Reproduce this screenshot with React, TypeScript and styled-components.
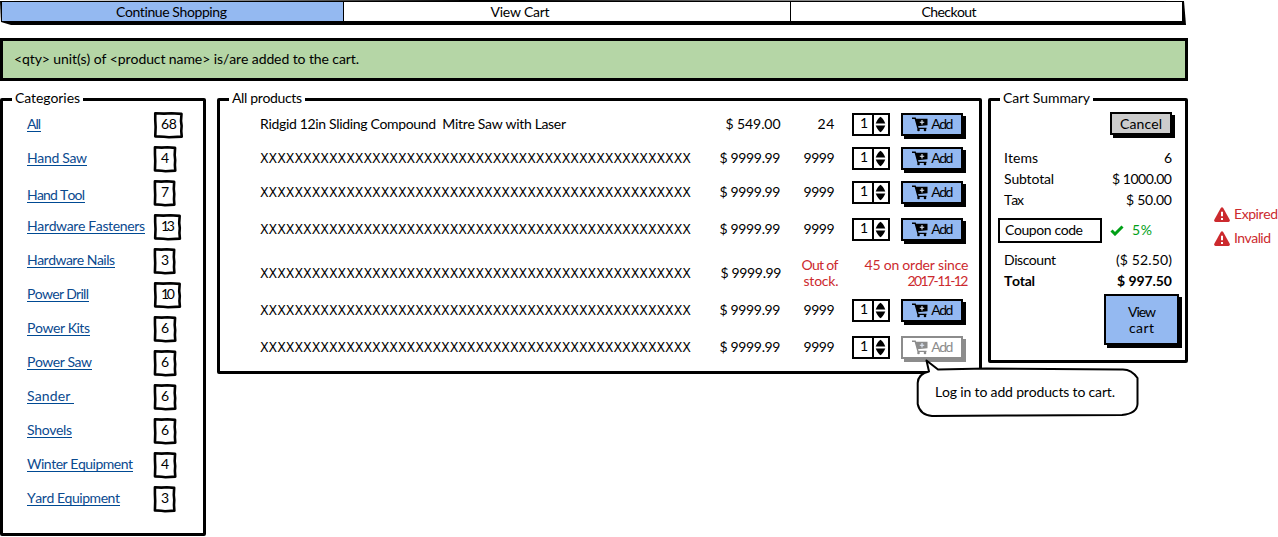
import React, { useLayoutEffect, useRef, useState } from "react";
import styled, { createGlobalStyle } from "styled-components";

const ink = "#000";
const blue = "#94b9f1";
const red = "#cc2a2e";
const grey = "#8c8c8c";

const GlobalStyle = createGlobalStyle`
  *, *::before, *::after { box-sizing: border-box; }
  body { margin: 0; background: #fff; overflow: hidden; }
`;

const Page = styled.div`
  position: relative;
  width: 1278px;
  height: 537px;
  overflow: hidden;
  font: 14px/20px Lato, "Liberation Sans", sans-serif;
  font-kerning: none;
  font-variant-ligatures: none;
  color: ${ink};
`;

const TextBox = styled.span<{ $w: number; $color?: string; $bold?: boolean; $narrow?: boolean }>`
  display: block;
  flex: none;
  width: ${(p) => p.$w}px;
  height: 20px;
  white-space: pre;
  font-family: ${(p) => (p.$narrow ? '"Liberation Sans Narrow", "DejaVu Sans Condensed", Lato, sans-serif' : "inherit")};
  font-weight: ${(p) => (p.$bold ? 700 : 400)};
  color: ${(p) => p.$color ?? "inherit"};
`;

type TextProps = { w: number; color?: string; bold?: boolean; narrow?: boolean; children: string };

function Text({ w, color, bold, narrow, children }: TextProps) {
  const ref = useRef<HTMLSpanElement>(null);
  const [track, setTrack] = useState(0);
  useLayoutEffect(() => {
    if (ref.current) {
      const natural = ref.current.getBoundingClientRect().width;
      setTrack((w - natural) / Math.max(1, children.length - 1));
    }
  }, [w, children]);
  return (
    <TextBox $w={w} $color={color} $bold={bold} $narrow={narrow} style={{ letterSpacing: track }}>
      <span ref={ref}>{children}</span>
    </TextBox>
  );
}

const Nav = styled.nav`
  display: flex;
  width: 1186px;
  height: 25px;
  border: solid ${ink};
  border-width: 2px 4px 4.5px 2px;
  clip-path: polygon(0 1px, 40% 0, 1184px 1px, 100% 25px, 11px 25px, 1px 22px);
`;

const Tab = styled.a<{ $w: number; $pr: number; $active?: boolean }>`
  display: flex;
  justify-content: center;
  width: ${(p) => p.$w}px;
  padding-right: ${(p) => p.$pr}px;
  background: ${(p) => (p.$active ? blue : "#fff")};
  border-right: 1px solid ${ink};
  &:last-child { border-right: 0; }
`;

const Alert = styled.div`
  display: flex;
  align-items: center;
  margin-top: 13px;
  width: 1188px;
  height: 43px;
  padding: 0 0 2px 11px;
  border: 3px solid ${ink};
  background: #b5d6a6;
`;

const Columns = styled.main`
  display: flex;
  align-items: flex-start;
  margin-top: 17px;
`;

const Panel = styled.section<{ $w: number; $h: number; $ml?: number }>`
  position: relative;
  width: ${(p) => p.$w}px;
  height: ${(p) => p.$h}px;
  margin-left: ${(p) => p.$ml ?? 0}px;
  border: 3px solid ${ink};
  border-radius: 2px;
`;

const Legend = styled.h2`
  position: absolute;
  top: -13px;
  left: 9px;
  margin: 0;
  padding: 0 3px;
  background: #fff;
  font: inherit;
`;

const CategoryList = styled.ul`
  list-style: none;
  margin: 0;
  padding: 11px 0 0 24px;
`;

const CategoryRow = styled.li`
  display: flex;
  height: 34px;
`;

const CategoryLink = styled.a<{ $drop?: number }>`
  height: 18px;
  margin-top: ${(p) => 2 + (p.$drop ?? 0)}px;
  border-bottom: 1px solid #004a93;
  color: #0b4a8f;
`;

const LinkCell = styled.div`
  width: 127px;
  display: flex;
  align-items: flex-start;
`;

const Count = styled.span<{ $w: number }>`
  position: relative;
  display: flex;
  align-items: center;
  width: ${(p) => p.$w}px;
  height: 26px;
  padding: 0 0 2px 7px;
`;

const CountFrame = styled.svg`
  position: absolute;
  inset: 0;
  width: 100%;
  height: 100%;
  overflow: visible;
`;

const ProductList = styled.div`
  display: flex;
  flex-direction: column;
`;

const ProductRow = styled.div<{ $mt: number }>`
  display: flex;
  align-items: center;
  height: 26px;
  margin-top: ${(p) => p.$mt}px;
  padding-left: 40px;
`;

const NameCell = styled.div`
  width: 440px;
`;

const NumberCell = styled.div<{ $w: number }>`
  display: flex;
  justify-content: flex-end;
  width: ${(p) => p.$w}px;
`;

const Stepper = styled.div`
  display: flex;
  width: 38px;
  height: 23px;
  margin-left: 17.5px;
  border: 2px solid ${ink};
  background: #fff;
  & > svg { flex: none; }
`;

const StepValue = styled.div`
  display: flex;
  align-items: center;
  flex: none;
  width: 20px;
  padding: 0 0 2px 6px;
  border-right: 2px solid ${ink};
`;

const Button = styled.button<{ $w: number; $h: number; $bg: string; $muted?: boolean; $ml?: number }>`
  display: flex;
  align-items: center;
  justify-content: center;
  width: ${(p) => p.$w}px;
  height: ${(p) => p.$h}px;
  margin: 0 0 0 ${(p) => p.$ml ?? 0}px;
  padding: 0;
  border: 2px solid ${(p) => (p.$muted ? grey : ink)};
  background: ${(p) => p.$bg};
  box-shadow: 3px 3px 0 ${(p) => (p.$muted ? grey : ink)};
  font: inherit;
  font-kerning: none;
  color: ${(p) => (p.$muted ? grey : ink)};
`;

const CartSvg = styled.svg`
  width: 16px;
  height: 15px;
  margin-right: 3px;
`;

const Stacked = styled.div<{ $w: number; $ml?: number; $center?: boolean }>`
  display: flex;
  flex-direction: column;
  align-items: ${(p) => (p.$center ? "center" : "flex-end")};
  width: ${(p) => p.$w}px;
  margin-left: ${(p) => p.$ml ?? 0}px;
  & > span { height: 16px; line-height: 16px; }
`;

const Summary = styled.div`
  display: flex;
  flex-direction: column;
  padding: 11px 13px 0 13px;
`;

const SummaryRow = styled.div<{ $mt?: number }>`
  display: flex;
  justify-content: space-between;
  height: 21px;
  margin-top: ${(p) => p.$mt ?? 0}px;
`;

const RightRow = styled.div<{ $mr?: number; $mt?: number }>`
  display: flex;
  justify-content: flex-end;
  margin-right: ${(p) => p.$mr ?? 0}px;
  margin-top: ${(p) => p.$mt ?? 0}px;
`;

const CouponRow = styled.div`
  display: flex;
  align-items: center;
  height: 27px;
  margin: 6px 0 6px -6px;
`;

const CouponInput = styled.div`
  display: flex;
  align-items: center;
  width: 104px;
  height: 25px;
  padding: 0 0 2px 5px;
  border: 2.5px solid ${ink};
`;

const CouponRate = styled.div`
  padding-bottom: 2px;
`;

const Check = styled.svg`
  width: 14px;
  height: 11px;
  margin: 0 8px;
`;

const Notes = styled.aside`
  display: flex;
  flex-direction: column;
  gap: 4px;
  margin: 106px 0 0 26px;
`;

const Note = styled.div`
  display: flex;
  align-items: center;
  gap: 4px;
  color: ${red};
`;

const Callout = styled.div`
  position: absolute;
  left: 916px;
  top: 358px;
  width: 224px;
  height: 60px;
  padding: 24px 0 0 19px;
`;

const CalloutShape = styled.svg`
  position: absolute;
  inset: 0;
`;

const CalloutText = styled.div`
  position: relative;
`;

const CartIcon = () => (
  <CartSvg viewBox="0 0 16 15">
    <path d="M0 1.300H3.200L6 11.400H14.500" fill="none" stroke="currentColor" strokeWidth="1.400" />
    <path d="M3.400 1.800H15.500V8.300L5.300 9.300z" fill="currentColor" />
    <circle cx="6.500" cy="13" r="1.300" fill="currentColor" />
    <circle cx="13" cy="13" r="1.300" fill="currentColor" />
    <path d="M10 3v4.400M7.800 5.200h4.400" stroke="#e6eefc" strokeWidth="1.100" fill="none" />
  </CartSvg>
);

const Arrows = () => (
  <svg width="13" height="19" viewBox="0 0 13 19">
    <path d="M6.500 1.800Q9 3.200 11.300 8.400H1.700Q4 3.200 6.500 1.800zM1.700 10.500H11.300Q9 15.800 6.500 17.200Q4 15.800 1.700 10.500z" fill={ink} />
  </svg>
);

const Warning = () => (
  <svg width="16" height="15" viewBox="0 0 16 15">
    <path d="M6.800.9Q8-.6 9.200.9L15.700 12.700Q16.300 14.700 14.500 15H1.500Q-.3 14.700.3 12.700z" fill={red} />
    <path d="M8 4.800v4.500M8 10.900v2" stroke="#fff" strokeWidth="2" />
  </svg>
);

const categories: [string, number, string, number, number][] = [
  ["All", 14, "68", 16, 30],
  ["Hand Saw", 60, "4", 8, 23],
  ["Hand Tool", 58, "7", 8, 22],
  ["Hardware Fasteners", 118, "13", 14, 28],
  ["Hardware Nails", 88, "3", 8, 22],
  ["Power Drill", 62, "10", 14, 28],
  ["Power Kits", 63, "6", 8, 23],
  ["Power Saw", 65, "6", 8, 23],
  ["Sander ", 47, "6", 8, 23],
  ["Shovels", 45, "6", 8, 23],
  ["Winter Equipment", 106, "4", 8, 23],
  ["Yard Equipment", 93, "3", 8, 22],
];

type Product = { mt: number; name?: string; price?: string; stock?: string; state?: "out" | "locked" };
const products: Product[] = [
  { mt: 10, name: "Ridgid 12in Sliding Compound  Mitre Saw with Laser", price: "$ 549.00", stock: "24" },
  { mt: 8 },
  { mt: 8 },
  { mt: 11 },
  { mt: 18, state: "out" },
  { mt: 11 },
  { mt: 11, state: "locked" },
];

export default function App() {
  return (
    <Page>
      <GlobalStyle />
      <Nav>
        <Tab $w={342} $pr={2} $active><Text w={111}>Continue Shopping</Text></Tab>
        <Tab $w={447} $pr={94}><Text w={59}>View Cart</Text></Tab>
        <Tab $w={391} $pr={75}><Text w={55}>Checkout</Text></Tab>
      </Nav>
      <Alert>
        <Text w={345}>{"<qty> unit(s) of <product name> is/are added to the cart."}</Text>
      </Alert>
      <Columns>
        <Panel $w={206} $h={438}>
          <Legend><Text w={65}>Categories</Text></Legend>
          <CategoryList>
            {categories.map(([name, w, count, cw, bw]) => (
              <CategoryRow key={name}>
                <LinkCell>
                  <CategoryLink $drop={name === "Hand Tool" ? 3 : 0}><Text w={w}>{name}</Text></CategoryLink>
                </LinkCell>
                <Count $w={bw}>
                  <CountFrame viewBox="0 0 24 26" preserveAspectRatio="none">
                    <path d="M1 1.300 8 1.600 14 1.300 22 1.900 21.600 9 22.100 14 21.800 19 22.200 24.600 12 25.200 8 24.700 1 24.400 1.300 15 1 8z" fill="none" stroke={ink} strokeWidth="2.600" strokeLinejoin="round" vectorEffect="non-scaling-stroke" />
                  </CountFrame>
                  <Text w={cw}>{count}</Text>
                </Count>
              </CategoryRow>
            ))}
          </CategoryList>
        </Panel>
        <Panel $w={765} $h={276} $ml={11}>
          <Legend><Text w={70}>All products</Text></Legend>
          <ProductList>
            {products.map((p, i) => (
              <ProductRow key={i} $mt={p.mt}>
                <NameCell>
                  <Text w={p.name ? 306 : 431} narrow={!p.name}>{p.name ?? "X".repeat(50)}</Text>
                </NameCell>
                <NumberCell $w={p.state === "out" ? 81.5 : 80.5}>
                  <Text w={p.price ? 55 : 61}>{p.price ?? "$ 9999.99"}</Text>
                </NumberCell>
                {p.state === "out" ? (
                  <>
                    <Stacked $w={57}>
                      <Text w={37} color={red}>Out of</Text>
                      <Text w={35} color={red}>stock.</Text>
                    </Stacked>
                    <Stacked $w={104} $ml={26}>
                      <Text w={104} color={red}>45 on order since</Text>
                      <Text w={61} color={red}>2017-11-12</Text>
                    </Stacked>
                  </>
                ) : (
                  <>
                    <NumberCell $w={54}>
                      <Text w={p.stock ? 17 : 31}>{p.stock ?? "9999"}</Text>
                    </NumberCell>
                    <Stepper>
                      <StepValue><Text w={8}>1</Text></StepValue>
                      <Arrows />
                    </Stepper>
                    <Button $w={62} $h={23} $ml={11} $bg={p.state ? "#fff" : blue} $muted={!!p.state}>
                      <CartIcon />
                      <Text w={22}>Add</Text>
                    </Button>
                  </>
                )}
              </ProductRow>
            ))}
          </ProductList>
        </Panel>
        <Panel $w={200} $h={265} $ml={6}>
          <Legend><Text w={87}>Cart Summary</Text></Legend>
          <Summary>
            <RightRow><Button $w={62} $h={23} $bg="#ccc"><Text w={42}>Cancel</Text></Button></RightRow>
            <SummaryRow $mt={13}><Text w={34}>Items</Text><Text w={8}>6</Text></SummaryRow>
            <SummaryRow><Text w={50}>Subtotal</Text><Text w={60}>$ 1000.00</Text></SummaryRow>
            <SummaryRow><Text w={20}>Tax</Text><Text w={46}>$ 50.00</Text></SummaryRow>
            <CouponRow>
              <CouponInput><Text w={78}>Coupon code</Text></CouponInput>
              <Check viewBox="0 0 14 11"><path d="M1.500 5.500 5 9 12.500 1.500" stroke="#00a016" strokeWidth="3" fill="none" /></Check>
              <CouponRate><Text w={20} color="#00a016">5%</Text></CouponRate>
            </CouponRow>
            <SummaryRow><Text w={52}>Discount</Text><Text w={56}>($ 52.50)</Text></SummaryRow>
            <SummaryRow><Text w={31} bold>Total</Text><Text w={55} bold>$ 997.50</Text></SummaryRow>
            <RightRow $mr={-7} $mt={2}>
              <Button $w={75} $h={51} $bg={blue}>
                <Stacked $w={28} $center><Text w={28}>View</Text><Text w={25}>cart</Text></Stacked>
              </Button>
            </RightRow>
          </Summary>
        </Panel>
        <Notes>
          <Note><Warning /><Text w={44}>Expired</Text></Note>
          <Note><Warning /><Text w={37}>Invalid</Text></Note>
        </Notes>
      </Columns>
      <Callout>
        <CalloutShape width="224" height="60" viewBox="0 0 224 60">
          <path d="M10.500 2.500 22 11.500 70 10.500 205 11.500Q215 10.500 221.500 20V46Q221 55.500 206 57L90 57.500 16 58Q4 57 1.700 46V25Q2 16 13 13.500 12 9 10.500 2.500z" fill="#fff" stroke={ink} strokeWidth="2" strokeLinejoin="round" />
        </CalloutShape>
        <CalloutText><Text w={180}>Log in to add products to cart.</Text></CalloutText>
      </Callout>
    </Page>
  );
}
